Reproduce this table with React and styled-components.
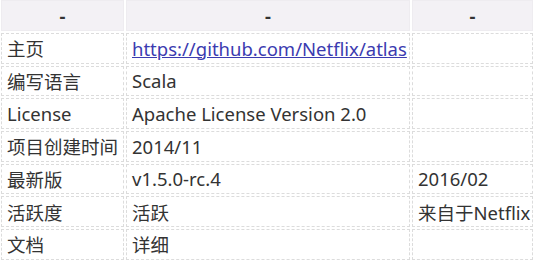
import React from "react";
import styled, { createGlobalStyle } from "styled-components";

const rows = [
  { label: "主页", value: "https://github.com/Netflix/atlas", link: true, extra: "" },
  { label: "编写语言", value: "Scala", extra: "" },
  { label: "License", value: "Apache License Version 2.0", extra: "" },
  { label: "项目创建时间", value: "2014/11", extra: "" },
  { label: "最新版", value: "v1.5.0-rc.4", extra: "2016/02" },
  { label: "活跃度", value: "活跃", extra: "来自于Netflix" },
  { label: "文档", value: "详细", extra: "" },
];

const GlobalStyle = createGlobalStyle`
  body {
    margin: 0;
    background: #fff;
    font-family: "Noto Sans", "Noto Sans CJK SC", sans-serif;
    color: #333;
    overflow: hidden;
  }
`;

const Table = styled.table`
  border-collapse: separate;
  border-spacing: 2px;
  table-layout: fixed;
  width: 536px;
  margin: -2px 0 0 -1px;
  font-size: 18.5px;
`;

const HeadCell = styled.th`
  box-sizing: border-box;
  width: ${(props) => props.$w}px;
  height: 31px;
  padding: 0 5px;
  background: #f3f1f5;
  border: 1px solid #eeecf0;
  font-weight: 700;
  text-align: center;
  color: #333;
`;

const Cell = styled.td`
  box-sizing: border-box;
  height: 30.67px;
  padding: 0 5px;
  border: 1px dashed #dcdcdc;
  vertical-align: middle;
  white-space: nowrap;
  color: #333;
`;

const Link = styled.a`
  color: #3b3bb0;
  text-decoration: underline;
`;

export default function App() {
  return (
    <>
      <GlobalStyle />
      <Table>
        <thead>
          <tr>
            <HeadCell $w={123}>-</HeadCell>
            <HeadCell $w={284}>-</HeadCell>
            <HeadCell $w={121}>-</HeadCell>
          </tr>
        </thead>
        <tbody>
          {rows.map((r) => (
            <tr key={r.label}>
              <Cell>{r.label}</Cell>
              <Cell>{r.link ? <Link href="#">{r.value}</Link> : r.value}</Cell>
              <Cell>{r.extra}</Cell>
            </tr>
          ))}
        </tbody>
      </Table>
    </>
  );
}
